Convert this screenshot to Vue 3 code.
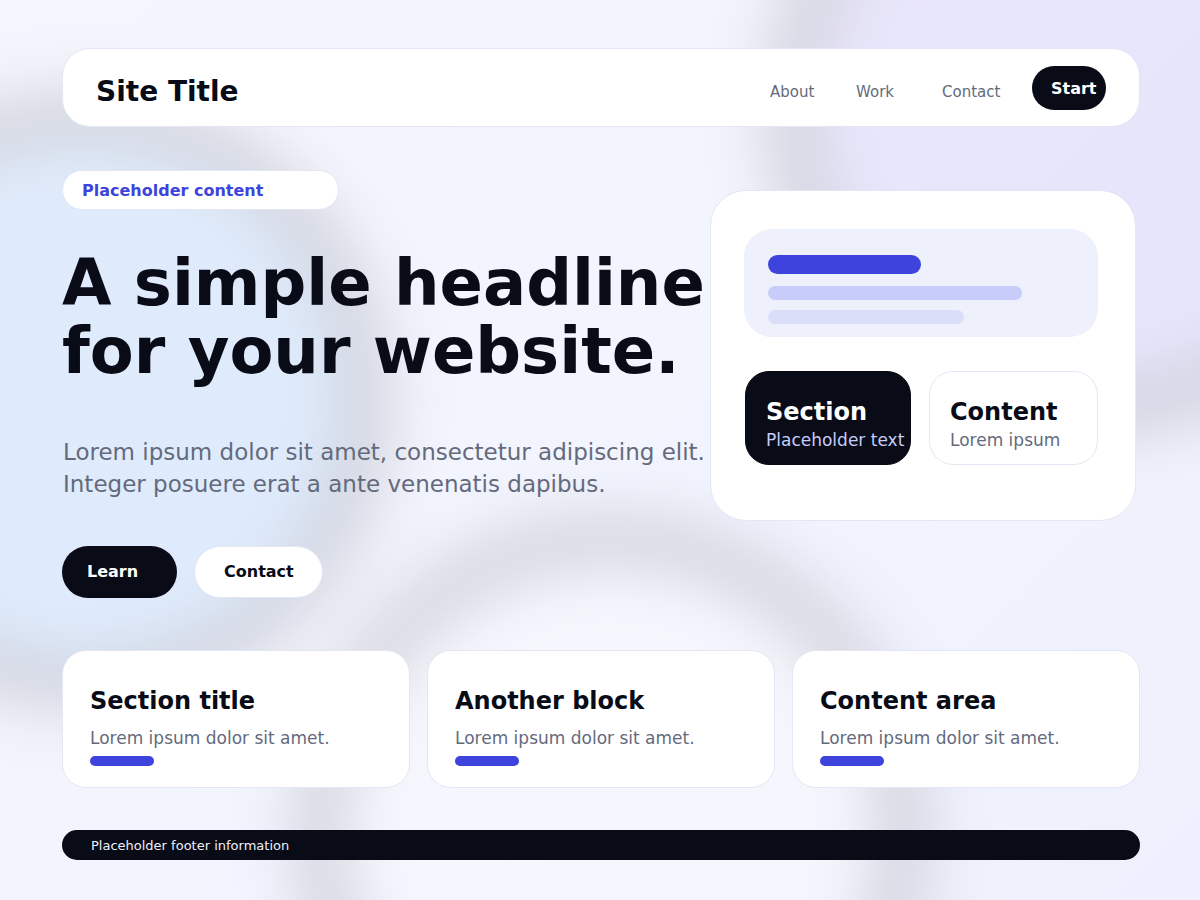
<script setup>
const links = ['About', 'Work', 'Contact']

const cards = [
  { title: 'Section title', text: 'Lorem ipsum dolor sit amet.' },
  { title: 'Another block', text: 'Lorem ipsum dolor sit amet.' },
  { title: 'Content area', text: 'Lorem ipsum dolor sit amet.' },
]

// Soft circles behind the page. Each edge fades through a darker tint.
const softness = 36
const strength = 0.34
const steps = [
  [-2.5, 0.994], [-2, 0.977], [-1.5, 0.933], [-1, 0.841], [-0.5, 0.691], [0, 0.5],
  [0.5, 0.309], [1, 0.159], [1.5, 0.067], [2, 0.023], [2.5, 0.006], [3, 0],
]
const blobs = [
  { id: 'blob-blue', x: 82, y: 400, r: 282, color: [184, 218, 250] },
  { id: 'blob-violet', x: 1092, y: 110, r: 300, color: [213, 203, 245] },
  { id: 'blob-white', x: 612, y: 832, r: 290, color: [255, 255, 255] },
].map((b) => {
  const reach = b.r + 3 * softness
  return {
    ...b,
    reach,
    stops: steps.map(([d, a]) => ({
      offset: (b.r + d * softness) / reach,
      color: `rgb(${b.color.map((c) => Math.round(c * a)).join(',')})`,
      opacity: a * strength,
    })),
  }
})
</script>

<template>
  <div class="page">
    <svg class="backdrop" viewBox="0 0 1200 900" preserveAspectRatio="xMidYMid slice" aria-hidden="true">
      <defs>
        <radialGradient v-for="b in blobs" :id="b.id" :key="b.id">
          <stop
            v-for="s in b.stops"
            :key="s.offset"
            :offset="s.offset"
            :stop-color="s.color"
            :stop-opacity="s.opacity"
          />
        </radialGradient>
      </defs>
      <circle v-for="b in blobs" :key="b.id" :cx="b.x" :cy="b.y" :r="b.reach" :fill="`url(#${b.id})`" />
    </svg>

    <header class="header">
      <a class="brand" href="#">Site Title</a>
      <nav class="nav">
        <a v-for="link in links" :key="link" href="#">{{ link }}</a>
      </nav>
      <button class="start" type="button">Start</button>
    </header>

    <main>
      <section class="hero">
        <div class="intro">
          <p class="pill">Placeholder content</p>
          <h1>A simple headline<br />for your website.</h1>
          <p class="lead">
            Lorem ipsum dolor sit amet, consectetur adipiscing elit.<br />Integer posuere erat a ante venenatis dapibus.
          </p>
          <div class="actions">
            <button class="learn" type="button">Learn</button>
            <button class="contact" type="button">Contact</button>
          </div>
        </div>

        <div class="panel">
          <div class="preview">
            <span class="line strong"></span>
            <span class="line medium"></span>
            <span class="line light"></span>
          </div>
          <div class="tiles">
            <div class="tile dark">
              <h2>Section</h2>
              <p>Placeholder text</p>
            </div>
            <div class="tile">
              <h2>Content</h2>
              <p>Lorem ipsum</p>
            </div>
          </div>
        </div>
      </section>

      <section class="cards">
        <article v-for="card in cards" :key="card.title" class="card">
          <h2>{{ card.title }}</h2>
          <p>{{ card.text }}</p>
          <span class="accent"></span>
        </article>
      </section>
    </main>

    <footer class="footer">Placeholder footer information</footer>
  </div>
</template>

<style>
body {
  margin: 0;
}
</style>

<style scoped>
.page {
  position: relative;
  isolation: isolate;
  box-sizing: border-box;
  min-height: 100vh;
  padding: 48px 60px 40px 62px;
  overflow: hidden;
  background: linear-gradient(135deg, #f5f5fd, #f2f4fe 50%, #eef0fd);
  color: #090b16;
  font-family: "DejaVu Sans", Verdana, sans-serif;
}

.page *,
.page *::before {
  box-sizing: border-box;
}

.backdrop {
  position: absolute;
  inset: 0;
  z-index: -1;
  width: 100%;
  height: 100%;
}

h1,
h2,
p {
  margin: 0;
}

a {
  color: inherit;
  text-decoration: none;
}

button {
  border: 0;
  font: bold 16px/20px "DejaVu Sans", Verdana, sans-serif;
  text-align: left;
  cursor: pointer;
}

.header {
  display: flex;
  align-items: center;
  height: 79px;
  padding: 0 33px;
  border: 1px solid #e4e6f4;
  border-radius: 28px;
  background: #fff;
}

.brand {
  margin-top: 8px;
  font-size: 28px;
  font-weight: bold;
  line-height: 32px;
}

.nav {
  display: grid;
  grid-template-columns: repeat(3, 86px);
  margin: 8px 4px 0 auto;
  color: #646a7c;
  font-size: 15px;
  line-height: 20px;
}

.start {
  width: 74px;
  height: 44px;
  padding: 2px 0 0 19px;
  border-radius: 22px;
  background: #090b16;
  color: #fff;
}

.hero {
  display: grid;
  grid-template-columns: 648fr 426fr;
  align-items: start;
  margin-top: 43px;
  padding-right: 4px;
}

.pill {
  width: 277px;
  height: 40px;
  padding: 10px 19px;
  border: 1px solid #e4e6f4;
  border-radius: 20px;
  background: #fff;
  color: #3d43dc;
  font-size: 16px;
  font-weight: bold;
  line-height: 20px;
}

h1 {
  margin-top: 39px;
  font-size: 64px;
  line-height: 68px;
  white-space: nowrap;
}

.lead {
  margin-top: 51px;
  padding-left: 1px;
  color: #646a7c;
  font-size: 23px;
  line-height: 32px;
  white-space: nowrap;
}

.actions {
  display: flex;
  gap: 17px;
  margin-top: 46px;
}

.actions button {
  height: 52px;
  border-radius: 26px;
}

.actions .learn {
  width: 115px;
  padding: 0 25px;
  background: #090b16;
  color: #fff;
}

.actions .contact {
  width: 129px;
  padding: 0 29px;
  border: 1px solid #e4e6f4;
  background: #fff;
  color: #090b16;
}

.panel {
  margin-top: 20px;
  padding: 38px 37px 55px 33px;
  border: 1px solid #e4e6f4;
  border-radius: 36px;
  background: #fff;
}

.preview {
  display: flex;
  flex-direction: column;
  height: 108px;
  padding: 26px 24px 12px;
  border-radius: 28px;
  background: #eef0fc;
}

.line {
  height: 14px;
  border-radius: 7px;
}

.strong {
  width: 50%;
  height: 19px;
  border-radius: 10px;
  background: #3d43dc;
}

.medium {
  width: 83%;
  margin-top: 12px;
  background: #c7ccfb;
}

.light {
  width: 64%;
  margin-top: 10px;
  background: #dadef9;
}

.tiles {
  display: grid;
  grid-template-columns: 166fr 169fr;
  gap: 18px;
  margin-top: 34px;
  padding-left: 1px;
}

.tile {
  height: 94px;
  padding: 26px 0 0 20px;
  border: 1px solid #e4e6f4;
  border-radius: 24px;
  white-space: nowrap;
}

.tile.dark {
  border-color: #090b16;
  background: #090b16;
  color: #fff;
}

h2 {
  font-size: 24px;
  line-height: 28px;
}

.tile p,
.card p {
  color: #646a7c;
  font-size: 17px;
  line-height: 20px;
}

.tile p {
  margin-top: 4px;
}

.tile.dark p {
  color: #c7ccfb;
}

.cards {
  display: grid;
  grid-template-columns: repeat(3, 1fr);
  gap: 17px;
  margin-top: 52px;
}

.card {
  height: 138px;
  padding: 36px 27px 0;
  border: 1px solid #e4e6f4;
  border-radius: 24px;
  background: #fff;
}

.card p {
  margin-top: 13px;
}

.accent {
  display: block;
  width: 64px;
  height: 10px;
  margin-top: 8px;
  border-radius: 5px;
  background: #3d43dc;
}

.footer {
  height: 30px;
  margin-top: 42px;
  padding: 6px 29px 4px;
  border-radius: 15px;
  background: #090b16;
  color: #eef0fc;
  font-size: 13px;
  line-height: 20px;
}
</style>
